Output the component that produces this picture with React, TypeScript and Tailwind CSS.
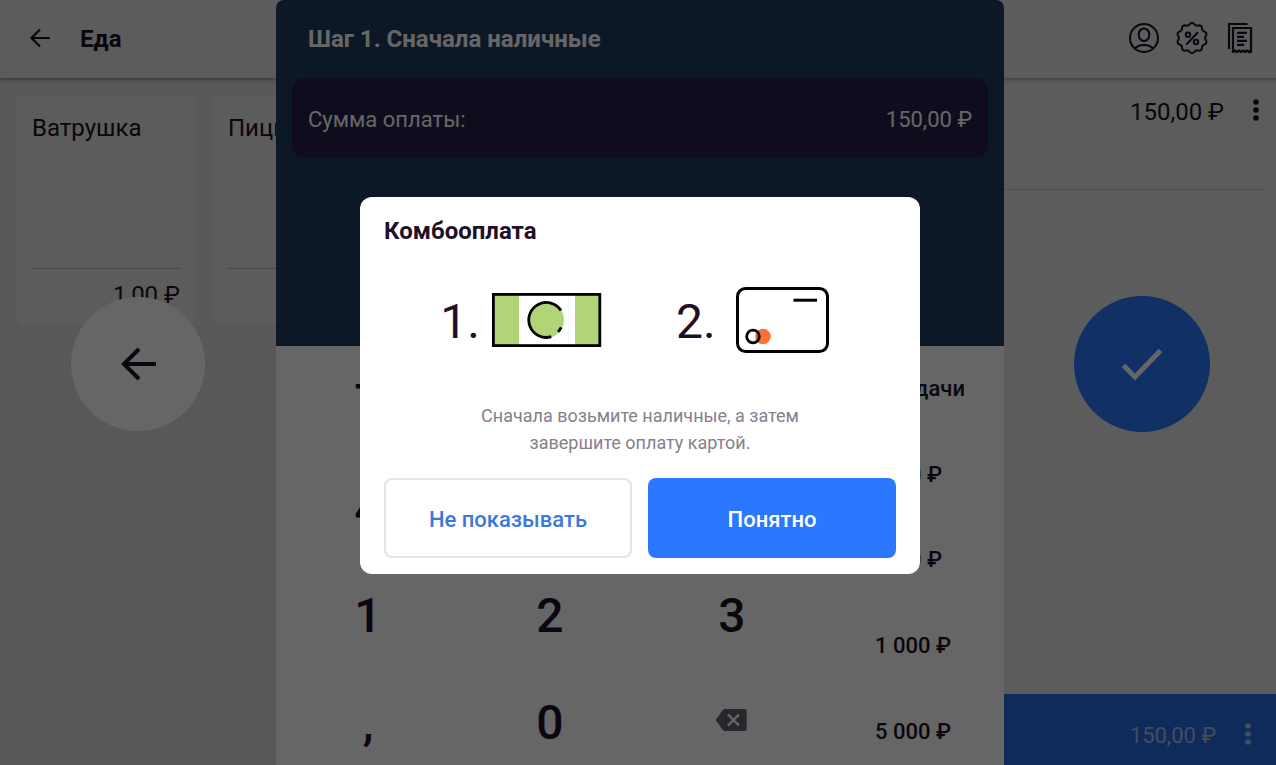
import type { ReactNode } from 'react';

const products = [
  { name: 'Ватрушка', price: '1,00 ₽' },
  { name: 'Пицца', price: '150,00 ₽' },
];

const keys = ['7', '8', '9', '4', '5', '6', '1', '2', '3', ',', '0'];
const quickAmounts = ['Без сдачи', '100 ₽', '500 ₽', '1 000 ₽', '5 000 ₽'];

// scalloped outline of the discount badge
const badgePoints = Array.from({ length: 140 }, (_, i) => {
  const a = (i / 140) * Math.PI * 2;
  const r = 14.1 + Math.cos(10 * a);
  return `${(16 + r * Math.sin(a)).toFixed(2)},${(16 - r * Math.cos(a)).toFixed(2)}`;
}).join(' ');

function ProfileIcon() {
  return (
    <svg className="size-8" viewBox="0 0 32 32" fill="none" stroke="currentColor" strokeWidth="2">
      <circle cx="16" cy="16" r="14" />
      <ellipse cx="16" cy="12.7" rx="5.3" ry="6.3" />
      <path d="M7 26.5c2-2.4 5.2-3.5 9-3.5s7 1.1 9 3.5" />
    </svg>
  );
}

function DiscountIcon() {
  return (
    <svg className="size-8" viewBox="0 0 32 32" fill="none" stroke="currentColor" strokeWidth="2">
      <polygon points={badgePoints} strokeLinejoin="round" />
      <circle cx="12" cy="12.7" r="2.2" />
      <circle cx="20" cy="20" r="2.2" />
      <path d="M21.5 10.8 10.8 22" strokeLinecap="round" />
    </svg>
  );
}

function ReceiptIcon() {
  return (
    <svg className="size-8" viewBox="0 0 32 32" fill="none" stroke="currentColor" strokeWidth="2.2">
      <path d="M5 27V2h18.5" />
      <path d="M9 31V6h18v25" />
      <path d="m9 30 2-1.5 2 1.5 2-1.5 2 1.5 2-1.5 2 1.5 2-1.5 2 1.5 2-1.5" />
      <path d="M13 10.9h10M13 14.9h7M13 18.9h10M13 22.9h7" />
    </svg>
  );
}

function KebabIcon() {
  return (
    <svg className="size-8" viewBox="0 0 32 32" fill="currentColor">
      <circle cx="16" cy="8" r="2.8" />
      <circle cx="16" cy="16" r="2.8" />
      <circle cx="16" cy="24" r="2.8" />
    </svg>
  );
}

function BackspaceIcon() {
  return (
    <svg className="h-6 w-8" viewBox="0 0 32 24">
      <path
        d="M10 1h19.5a2.2 2.2 0 0 1 2.2 2.2v17.6a2.2 2.2 0 0 1-2.2 2.2H10a3 3 0 0 1-2.4-1.2L.8 12l6.8-9.8A3 3 0 0 1 10 1z"
        fill="#6a6070"
      />
      <path d="m13 6.5 11 11m0-11-11 11" stroke="#fff" strokeWidth="2.4" />
    </svg>
  );
}

function BanknoteIcon() {
  return (
    <svg className="h-[54px] w-[110px]" viewBox="0 0 110 54" fill="none">
      <path d="M2 2h25v50H2zM83 2h25v50H83z" fill="#b0d477" />
      <circle cx="54" cy="27" r="18" fill="#b0d477" />
      <rect x="1.4" y="1.4" width="106.4" height="51.2" stroke="#000" strokeWidth="2.8" />
      <path d="M69 17.5A17.5 17.5 0 1 0 59.3 43.7" stroke="#000" strokeWidth="2.8" />
      <path d="M66 38.8a17.5 17.5 0 0 0 3.2-4.5" stroke="#000" strokeWidth="2.8" />
    </svg>
  );
}

function BankCardIcon() {
  return (
    <svg className="h-[66px] w-[114px]" viewBox="0 0 114 66" fill="none">
      <circle cx="37" cy="49.5" r="7.8" fill="#ff7033" />
      <rect x="11.5" y="1.5" width="90" height="63" rx="8" stroke="#000" strokeWidth="3" />
      <path d="M67.5 13.2H91" stroke="#000" strokeWidth="3" />
      <circle cx="27" cy="49.5" r="6.3" stroke="#000" strokeWidth="2.8" />
    </svg>
  );
}

function IconButton({ label, children }: { label: string; children: ReactNode }) {
  return (
    <button type="button" aria-label={label} className="flex items-center justify-center pb-0.5">
      {children}
    </button>
  );
}

function ShopScreen() {
  return (
    <div className="flex h-full flex-col bg-[#f4f4fb]">
      <header className="z-10 flex h-[78px] items-center justify-between bg-white px-6 shadow-[0_1px_4px_rgba(0,0,0,0.45)]">
        <div className="flex items-center gap-6">
          <IconButton label="Назад">
            <svg className="size-8" viewBox="0 0 32 32" fill="none" stroke="currentColor" strokeWidth="2.2">
              <path d="M26 16H8M16 7.5 7.5 16l8.5 8.5" />
            </svg>
          </IconButton>
          <h1 className="text-2xl font-bold">Еда</h1>
        </div>
        <div className="flex items-center gap-4">
          <IconButton label="Профиль"><ProfileIcon /></IconButton>
          <IconButton label="Скидки"><DiscountIcon /></IconButton>
          <IconButton label="Чеки"><ReceiptIcon /></IconButton>
        </div>
      </header>

      <div className="flex min-h-0 flex-1">
        <main className="flex flex-1 items-start gap-4 px-4 pt-[17px]">
          {products.map((p) => (
            <article key={p.name} className="h-[230px] w-[180px] rounded-lg bg-white px-4 pt-[17px]">
              <h2 className="h-[157px] border-b border-[#c8c8d0] text-2xl">{p.name}</h2>
              <p className="pt-2.5 text-right text-2xl">{p.price}</p>
            </article>
          ))}
        </main>

        <section className="flex w-[480px] flex-col bg-white">
          <div className="mx-4 flex h-28 items-start justify-end gap-4 border-b border-[#d8d8dd] pt-4">
            <span className="pt-0.5 text-2xl">150,00 ₽</span>
            <div className="-mr-2">
              <IconButton label="Действия с позицией"><KebabIcon /></IconButton>
            </div>
          </div>
          <div className="mt-auto flex h-20 items-center justify-end gap-4 bg-[#2b78ff] pt-0.5 pr-4 text-white/70">
            <span className="text-[22px]">150,00 ₽</span>
            <IconButton label="Действия с чеком"><KebabIcon /></IconButton>
          </div>
        </section>
      </div>
    </div>
  );
}

function PaymentScreen() {
  return (
    <div className="absolute inset-0 grid grid-cols-[276px_1fr_276px] bg-black/10">
      <div className="flex items-center justify-center pb-[46px]">
        <button type="button" aria-label="Назад" className="flex size-[134px] items-center justify-center rounded-full bg-white">
          <svg className="size-12" viewBox="0 0 48 48" fill="none" stroke="currentColor" strokeWidth="4">
            <path d="M42 24H10M25 9 10 24l15 15" />
          </svg>
        </button>
      </div>

      <section className="flex flex-col overflow-hidden rounded-t-lg bg-white">
        <div className="h-[346px] bg-[#203c5f] px-4 text-white">
          <h2 className="flex h-[78px] items-center px-4 text-2xl font-bold">Шаг 1. Сначала наличные</h2>
          <div className="flex h-20 items-center justify-between rounded-xl bg-[#26204b] px-4 pt-0.5 text-[22px]">
            <span>Сумма оплаты:</span>
            <span>150,00 ₽</span>
          </div>
        </div>
        <div className="grid flex-1 grid-cols-[3fr_1fr]">
          <div className="grid grid-cols-3 grid-rows-4">
            {keys.map((k) => (
              <button key={k} type="button" className="pt-1 pl-0.5 text-5xl font-medium">
                {k}
              </button>
            ))}
            <IconButton label="Стереть"><BackspaceIcon /></IconButton>
          </div>
          <div className="grid grid-rows-5">
            {quickAmounts.map((a) => (
              <button key={a} type="button" className="text-[22px] font-medium">
                {a}
              </button>
            ))}
          </div>
        </div>
      </section>

      <div className="flex items-center justify-center pb-[46px]">
        <button type="button" aria-label="Оплатить" className="flex size-[136px] items-center justify-center rounded-full bg-[#2b78ff] text-white">
          <svg className="size-12" viewBox="0 0 48 48" fill="none" stroke="currentColor" strokeWidth="5">
            <path d="M5.5 25.5 17 37l25.5-26.5" />
          </svg>
        </button>
      </div>
    </div>
  );
}

function ComboDialog() {
  return (
    <div className="absolute inset-0 flex items-center justify-center bg-black/60 pb-[3px]">
      <div role="dialog" aria-labelledby="combo-title" className="w-[560px] rounded-xl bg-white px-6 pt-[18px] pb-4">
        <h2 id="combo-title" className="text-2xl font-bold">Комбооплата</h2>
        <div className="mt-10 flex h-[66px] items-center justify-center gap-[74px] text-5xl">
          <div className="flex items-center gap-3">
            <span className="pt-1">1.</span>
            <BanknoteIcon />
          </div>
          <div className="flex items-center gap-2.5">
            <span className="pt-1">2.</span>
            <BankCardIcon />
          </div>
        </div>
        <p className="mx-auto mt-[49px] w-[340px] text-center text-lg leading-[27px] text-[#86808c]">
          Сначала возьмите наличные, а затем завершите оплату картой.
        </p>
        <div className="mt-[22px] grid grid-cols-2 gap-4 text-[22px] font-medium">
          <button type="button" className="h-20 rounded-lg border-2 border-[#e4e4e6] pt-0.5 text-[#3a78dc]">
            Не показывать
          </button>
          <button type="button" className="h-20 rounded-lg bg-[#2b78ff] pt-0.5 text-white">
            Понятно
          </button>
        </div>
      </div>
    </div>
  );
}

export default function App() {
  return (
    <div className="h-screen overflow-hidden font-['Roboto',sans-serif] text-[#1f1028]">
      <div className="relative -mr-1 h-[calc(100%+9px)]">
        <ShopScreen />
        <div className="absolute inset-0 z-20">
          <PaymentScreen />
          <ComboDialog />
        </div>
      </div>
    </div>
  );
}
